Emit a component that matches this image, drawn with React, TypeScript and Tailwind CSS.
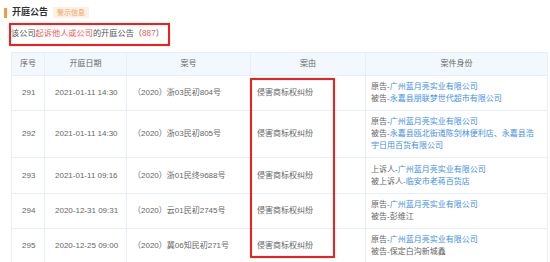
import React from 'react'

type Party = { role: string; name: string; link?: boolean }

type Row = {
  no: string
  date: string
  caseNo: string
  reason: string
  parties: Party[]
  h: number
}

const rows: Row[] = [
  {
    no: '291',
    date: '2021-01-11 14:30',
    caseNo: '（2020）浙03民初804号',
    reason: '侵害商标权纠纷',
    parties: [
      { role: '原告-', name: '广州蓝月亮实业有限公司', link: true },
      { role: '被告-', name: '永嘉县朋联梦世代超市有限公司', link: true },
    ],
    h: 35,
  },
  {
    no: '292',
    date: '2021-01-11 14:30',
    caseNo: '（2020）浙03民初805号',
    reason: '侵害商标权纠纷',
    parties: [
      { role: '原告-', name: '广州蓝月亮实业有限公司', link: true },
      { role: '被告-', name: '永嘉县瓯北街道陈剑林便利店、永嘉县浩宇日用百货有限公司', link: true },
    ],
    h: 47,
  },
  {
    no: '293',
    date: '2021-01-11 09:16',
    caseNo: '（2020）浙01民终9688号',
    reason: '侵害商标权纠纷',
    parties: [
      { role: '上诉人-', name: '广州蓝月亮实业有限公司', link: true },
      { role: '被上诉人-', name: '临安市老蒋百货店', link: true },
    ],
    h: 36,
  },
  {
    no: '294',
    date: '2020-12-31 09:31',
    caseNo: '（2020）云01民初2745号',
    reason: '侵害商标权纠纷',
    parties: [
      { role: '原告-', name: '广州蓝月亮实业有限公司', link: true },
      { role: '被告-', name: '彭维江' },
    ],
    h: 35,
  },
  {
    no: '295',
    date: '2020-12-25 09:00',
    caseNo: '（2020）冀06知民初271号',
    reason: '侵害商标权纠纷',
    parties: [
      { role: '原告-', name: '广州蓝月亮实业有限公司', link: true },
      { role: '被告-', name: '保定白沟新城鑫' },
    ],
    h: 35,
  },
]

const headers = ['序号', '开庭日期', '案号', '案由', '案件身份']

export default function App() {
  return (
    <div className="w-[550px] h-[262px] overflow-hidden bg-white text-[#666] font-['Liberation_Sans','Noto_Sans_CJK_SC',sans-serif]">
      {/* title */}
      <div className="flex items-center pl-[4px] pt-[7px]">
        <div className="w-[3px] h-[10px] bg-[#f39a3c]" />
        <span className="ml-[5px] text-[9px] leading-[11px] font-bold text-[#333]">开庭公告</span>
        <span className="ml-[5px] h-[11px] px-[4px] bg-[#fdf0e4] text-[#f7a35c] text-[7px] leading-[11px]">警示信息</span>
      </div>

      {/* summary */}
      <div className="ml-[9px] mt-[5px] w-[161px] h-[23px] border-2 border-[#ff1a1a] flex items-center text-[8.2px] text-[#555] whitespace-nowrap">
        <span>该公司</span>
        <span className="text-[#f25c5c]">起诉他人或公司</span>
        <span>的开庭公告（</span>
        <span className="text-[#f25c5c]">887</span>
        <span>）</span>
      </div>

      {/* table */}
      <div className="relative ml-[11px] mt-[6px] w-[536px]">
        <table className="w-[536px] table-fixed border-collapse text-[8px] leading-[12px]">
          <colgroup>
            <col className="w-[33px]" />
            <col className="w-[82px]" />
            <col className="w-[124px]" />
            <col className="w-[115px]" />
            <col className="w-[182px]" />
          </colgroup>
          <thead>
            <tr className="h-[23px] bg-[#f2f8fe]">
              {headers.map(h => (
                <th key={h} className="border border-[#e6eef6] font-normal text-[#666] text-center">
                  {h}
                </th>
              ))}
            </tr>
          </thead>
          <tbody>
            {rows.map(r => (
              <tr key={r.no} style={{ height: r.h }}>
                <td className="border border-[#e6eef6] pl-[10px] whitespace-nowrap">{r.no}</td>
                <td className="border border-[#e6eef6] pl-[10px] whitespace-nowrap">{r.date}</td>
                <td className="border border-[#e6eef6] pl-[6px] whitespace-nowrap">{r.caseNo}</td>
                <td className="border border-[#e6eef6] pl-[6px] whitespace-nowrap">{r.reason}</td>
                <td className="border border-[#e6eef6] pl-[5px] pr-[10px] py-[5px]">
                  {r.parties.map(p => (
                    <div key={p.role} className="leading-[12px]">
                      {p.role}
                      <span className={p.link ? 'text-[#3f8fe6]' : ''}>{p.name}</span>
                    </div>
                  ))}
                </td>
              </tr>
            ))}
          </tbody>
        </table>
        {/* annotation box over 案由 column */}
        <div className="absolute left-[239px] top-[26px] w-[85px] h-[180px] border-2 border-[#ff1a1a] pointer-events-none" />
      </div>
    </div>
  )
}
